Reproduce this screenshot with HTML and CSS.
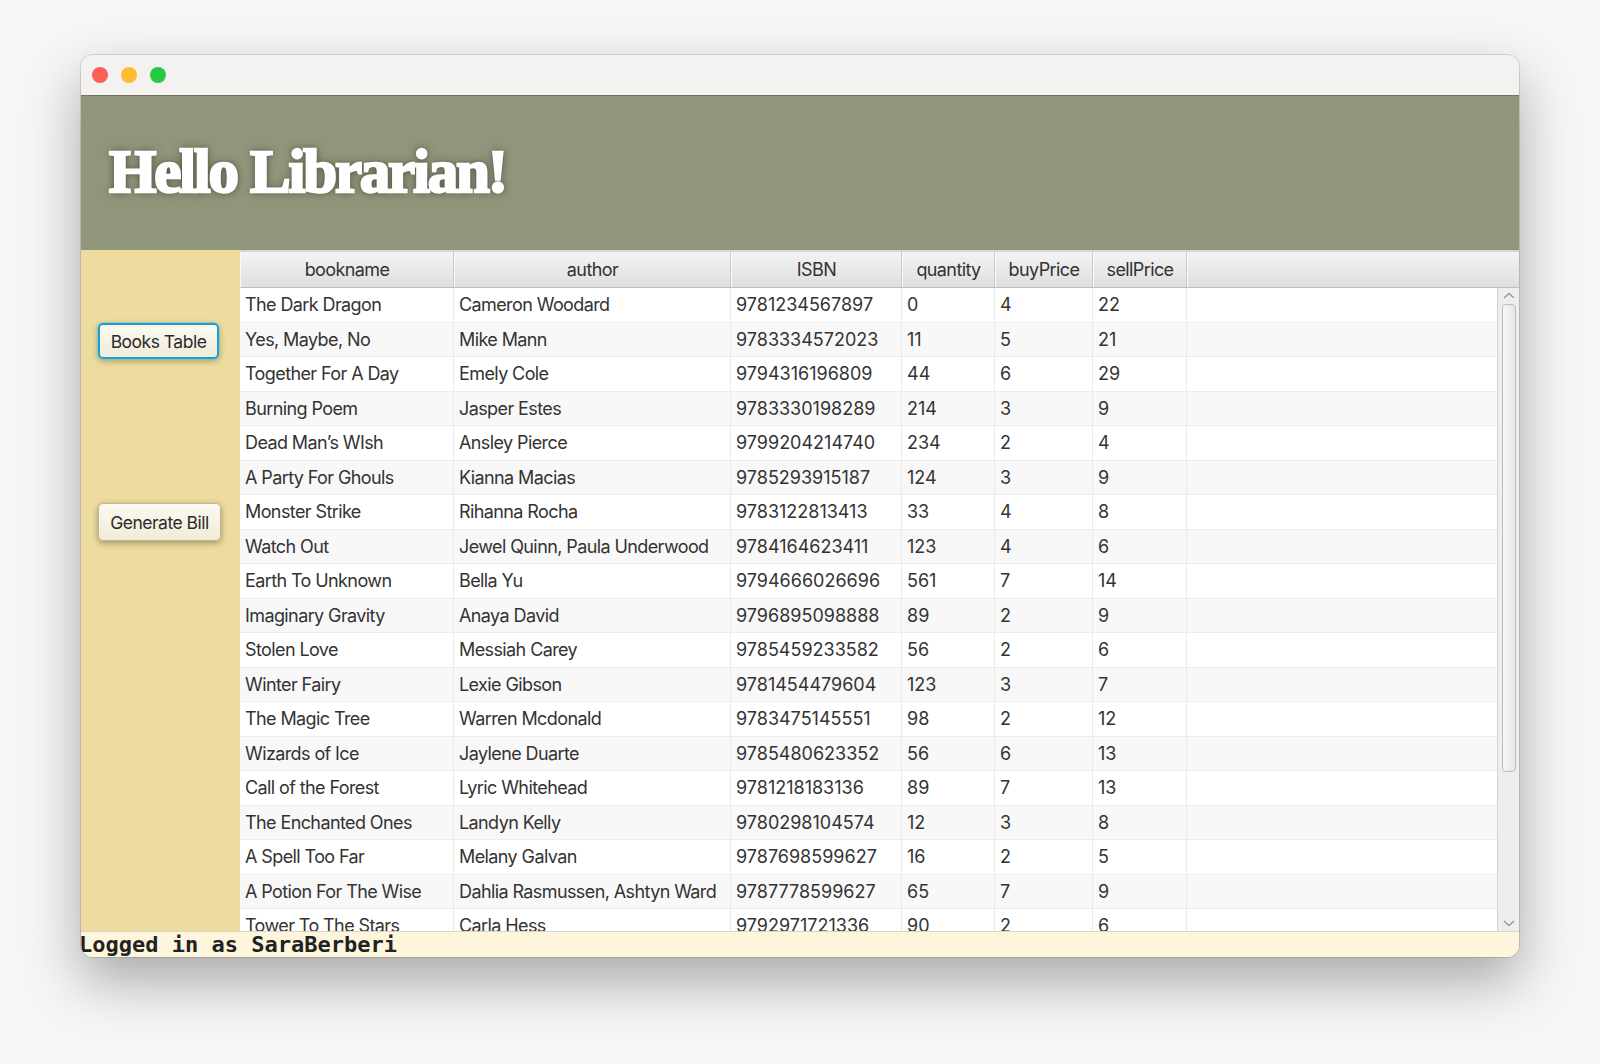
FILE: index.html
```html
<!DOCTYPE html>
<html>
<head>
<meta charset="utf-8">
<link rel="stylesheet" href="styles.css">
</head>
<body>
<div class="window">
  <div class="titlebar">
    <span class="light red"></span>
    <span class="light yellow"></span>
    <span class="light green"></span>
  </div>
  <div class="header">
    <h1 class="title">Hello Librarian!</h1>
  </div>
  <div class="main">
    <div class="sidebar">
      <button class="btn focused">Books Table</button>
      <button class="btn bill">Generate Bill</button>
    </div>
    <div class="table">
      <div class="thead">
        <div class="th">bookname</div>
        <div class="th">author</div>
        <div class="th">ISBN</div>
        <div class="th">quantity</div>
        <div class="th">buyPrice</div>
        <div class="th">sellPrice</div>
        <div class="th filler"></div>
      </div>
      <div class="tbody-wrap">
        <div class="tbody">
          <div class="tr"><div class="td">The Dark Dragon</div><div class="td">Cameron Woodard</div><div class="td">9781234567897</div><div class="td">0</div><div class="td">4</div><div class="td">22</div><div class="td"></div></div>
          <div class="tr"><div class="td">Yes, Maybe, No</div><div class="td">Mike Mann</div><div class="td">9783334572023</div><div class="td">11</div><div class="td">5</div><div class="td">21</div><div class="td"></div></div>
          <div class="tr"><div class="td">Together For A Day</div><div class="td">Emely Cole</div><div class="td">9794316196809</div><div class="td">44</div><div class="td">6</div><div class="td">29</div><div class="td"></div></div>
          <div class="tr"><div class="td">Burning Poem</div><div class="td">Jasper Estes</div><div class="td">9783330198289</div><div class="td">214</div><div class="td">3</div><div class="td">9</div><div class="td"></div></div>
          <div class="tr"><div class="td">Dead Man’s WIsh</div><div class="td">Ansley Pierce</div><div class="td">9799204214740</div><div class="td">234</div><div class="td">2</div><div class="td">4</div><div class="td"></div></div>
          <div class="tr"><div class="td">A Party For Ghouls</div><div class="td">Kianna Macias</div><div class="td">9785293915187</div><div class="td">124</div><div class="td">3</div><div class="td">9</div><div class="td"></div></div>
          <div class="tr"><div class="td">Monster Strike</div><div class="td">Rihanna Rocha</div><div class="td">9783122813413</div><div class="td">33</div><div class="td">4</div><div class="td">8</div><div class="td"></div></div>
          <div class="tr"><div class="td">Watch Out</div><div class="td">Jewel Quinn, Paula Underwood</div><div class="td">9784164623411</div><div class="td">123</div><div class="td">4</div><div class="td">6</div><div class="td"></div></div>
          <div class="tr"><div class="td">Earth To Unknown</div><div class="td">Bella Yu</div><div class="td">9794666026696</div><div class="td">561</div><div class="td">7</div><div class="td">14</div><div class="td"></div></div>
          <div class="tr"><div class="td">Imaginary Gravity</div><div class="td">Anaya David</div><div class="td">9796895098888</div><div class="td">89</div><div class="td">2</div><div class="td">9</div><div class="td"></div></div>
          <div class="tr"><div class="td">Stolen Love</div><div class="td">Messiah Carey</div><div class="td">9785459233582</div><div class="td">56</div><div class="td">2</div><div class="td">6</div><div class="td"></div></div>
          <div class="tr"><div class="td">Winter Fairy</div><div class="td">Lexie Gibson</div><div class="td">9781454479604</div><div class="td">123</div><div class="td">3</div><div class="td">7</div><div class="td"></div></div>
          <div class="tr"><div class="td">The Magic Tree</div><div class="td">Warren Mcdonald</div><div class="td">9783475145551</div><div class="td">98</div><div class="td">2</div><div class="td">12</div><div class="td"></div></div>
          <div class="tr"><div class="td">Wizards of Ice</div><div class="td">Jaylene Duarte</div><div class="td">9785480623352</div><div class="td">56</div><div class="td">6</div><div class="td">13</div><div class="td"></div></div>
          <div class="tr"><div class="td">Call of the Forest</div><div class="td">Lyric Whitehead</div><div class="td">9781218183136</div><div class="td">89</div><div class="td">7</div><div class="td">13</div><div class="td"></div></div>
          <div class="tr"><div class="td">The Enchanted Ones</div><div class="td">Landyn Kelly</div><div class="td">9780298104574</div><div class="td">12</div><div class="td">3</div><div class="td">8</div><div class="td"></div></div>
          <div class="tr"><div class="td">A Spell Too Far</div><div class="td">Melany Galvan</div><div class="td">9787698599627</div><div class="td">16</div><div class="td">2</div><div class="td">5</div><div class="td"></div></div>
          <div class="tr"><div class="td">A Potion For The Wise</div><div class="td">Dahlia Rasmussen, Ashtyn Ward</div><div class="td">9787778599627</div><div class="td">65</div><div class="td">7</div><div class="td">9</div><div class="td"></div></div>
          <div class="tr"><div class="td">Tower To The Stars</div><div class="td">Carla Hess</div><div class="td">9792971721336</div><div class="td">90</div><div class="td">2</div><div class="td">6</div><div class="td"></div></div>
        </div>
        <div class="scrollbar">
          <svg class="arrow" width="14" height="10" viewBox="0 0 14 10"><path d="M2 7 L7 2.5 L12 7" fill="none" stroke="#9a9a9a" stroke-width="1.4"/></svg>
          <div class="track"><div class="thumb"></div></div>
          <svg class="arrow" width="14" height="10" viewBox="0 0 14 10"><path d="M2 3 L7 7.5 L12 3" fill="none" stroke="#9a9a9a" stroke-width="1.4"/></svg>
        </div>
      </div>
    </div>
  </div>
  <div class="status">Logged in as SaraBerberi</div>
</div>
</body>
</html>
```

FILE: styles.css
```css
html, body {
  margin: 0;
  padding: 0;
}
body {
  background: #f6f6f6;
  padding: 55px 0 0 81px;
  height: 1064px;
  box-sizing: border-box;
  overflow: hidden;
}
.window {
  width: 1438px;
  height: 902px;
  border-radius: 12px;
  overflow: hidden;
  display: flex;
  flex-direction: column;
  background: #fff;
  box-shadow: 0 24px 55px rgba(0,0,0,0.32), 0 0 0 1px rgba(0,0,0,0.12);
}
.titlebar {
  height: 40px;
  flex: none;
  background: #f4f2f0;
  border-bottom: 1px solid #6f735f;
  display: flex;
  align-items: center;
  padding-left: 11px;
  gap: 13px;
}
.light {
  width: 16px;
  height: 16px;
  border-radius: 50%;
}
.red { background: #fe5f57; }
.yellow { background: #febc2e; }
.green { background: #28c840; }
.header {
  height: 154px;
  flex: none;
  background: #8f967b;
  display: flex;
  align-items: center;
  padding-left: 28px;
}
.title {
  margin: 0;
  font-family: "Liberation Serif", serif;
  font-weight: bold;
  font-size: 61px;
  letter-spacing: -2.2px;
  color: #fff;
  -webkit-text-stroke: 2.4px #fff;
  text-shadow: 0 0 8px rgba(40,40,30,0.75), 0 0 3px rgba(40,40,30,0.5);
  line-height: 1;
  margin-top: -4px;
}
.main {
  flex: 1;
  display: flex;
  min-height: 0;
}
.sidebar {
  width: 159px;
  flex: none;
  background: #eddc9e;
  display: flex;
  flex-direction: column;
  align-items: flex-start;
  padding: 73px 0 0 17px;
  box-sizing: border-box;
}
.btn {
  font-family: Inter, "Liberation Sans", sans-serif;
  font-size: 17.5px;
  letter-spacing: -0.5px;
  white-space: nowrap;
  color: #2b2b2b;
  background: linear-gradient(#fcfaf1, #f1ebd8);
  border: 1px solid #bdb69f;
  border-radius: 5px;
  padding: 0;
  height: 36px;
  box-shadow: 0 2px 6px rgba(60,50,10,0.45);
}
.btn.focused {
  border: 2px solid #1f9fd0;
  box-shadow: 0 0 0 1px rgba(120,200,230,0.6), 0 2px 6px rgba(60,50,10,0.4);
  width: 121px;
}
.btn.bill {
  margin-top: 144px;
  height: 38px;
  width: 123px;
}
.table {
  flex: 1;
  display: flex;
  flex-direction: column;
  min-width: 0;
  font-family: Inter, "Liberation Sans", sans-serif;
  font-size: 18px;
  letter-spacing: -0.6px;
  color: #333;
}
.thead, .tr {
  display: grid;
  grid-template-columns: 214px 277px 171px 93px 98px 94px 1fr;
}
.thead {
  height: 38px;
  flex: none;
  background: linear-gradient(#f3f3f3, #dfdfdf);
  border-top: 2px solid #d6d6d6;
  border-bottom: 1px solid #c0c0c0;
  box-sizing: border-box;
}
.th {
  display: flex;
  align-items: center;
  justify-content: center;
  border-right: 1px solid #c9c9c9;
  border-left: 1px solid #fafafa;
}
.th.filler { border-right: none; }
.tbody-wrap {
  flex: 1;
  display: flex;
  min-height: 0;
}
.tbody {
  flex: 1;
  overflow: hidden;
}
.tr {
  height: 34.5px;
  box-sizing: border-box;
  border-bottom: 1px solid #ececec;
  background: #fff;
}
.tr:nth-child(even) { background: #f8f8f8; }
.td {
  display: flex;
  align-items: center;
  padding-left: 5px;
  border-right: 1px solid #ebebeb;
  white-space: nowrap;
  overflow: hidden;
}
.td:nth-child(n+3) { letter-spacing: 0; }
.td:last-child { border-right: none; }
.scrollbar {
  width: 22px;
  flex: none;
  background: #eeeeee;
  border-left: 1px solid #d4d4d4;
  box-sizing: border-box;
  display: flex;
  flex-direction: column;
  align-items: center;
}
.arrow {
  flex: none;
  margin: 0;
  height: 16px;
}
.track {
  flex: 1;
  width: 100%;
  display: flex;
  justify-content: center;
}
.thumb {
  width: 14px;
  height: 468px;
  border: 1px solid #bcbcbc;
  border-radius: 4px;
  background: linear-gradient(to right, #f7f7f7, #e6e6e6);
  box-sizing: border-box;
  margin-left: 1px;
}
.status {
  height: 26px;
  flex: none;
  background: #fdf6dc;
  border-top: 1px solid #d9d4c2;
  box-sizing: border-box;
  font-family: "DejaVu Sans Mono", "Liberation Mono", monospace;
  font-weight: bold;
  font-size: 22px;
  line-height: 25px;
  color: #222;
  padding-left: 0;
  margin-left: -2px;
  white-space: nowrap;
}
```
